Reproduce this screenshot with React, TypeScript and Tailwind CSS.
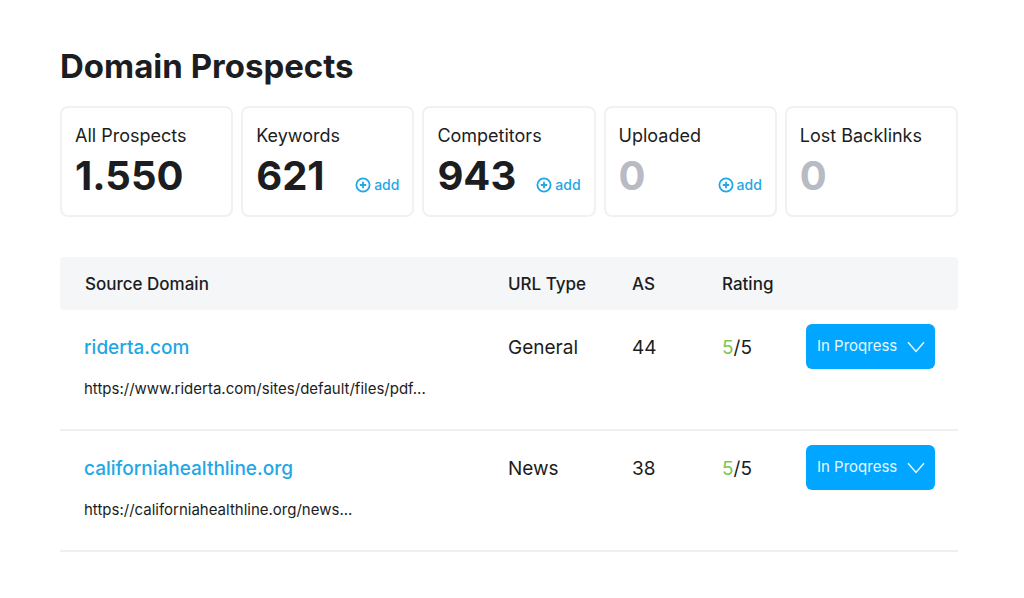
type Stat = { label: string; value: string; addable: boolean; empty: boolean };
type Prospect = { domain: string; href: string; url: string; type: string; score: number };

const stats: Stat[] = [
  { label: "All Prospects", value: "1.550", addable: false, empty: false },
  { label: "Keywords", value: "621", addable: true, empty: false },
  { label: "Competitors", value: "943", addable: true, empty: false },
  { label: "Uploaded", value: "0", addable: true, empty: true },
  { label: "Lost Backlinks", value: "0", addable: false, empty: true },
];

const prospects: Prospect[] = [
  {
    domain: "riderta.com",
    href: "https://www.riderta.com",
    url: "https://www.riderta.com/sites/default/files/pdf...",
    type: "General",
    score: 44,
  },
  {
    domain: "californiahealthline.org",
    href: "https://californiahealthline.org",
    url: "https://californiahealthline.org/news...",
    type: "News",
    score: 38,
  },
];

function PlusCircle() {
  return (
    <svg viewBox="0 0 16 16" className="size-4" fill="none" stroke="currentColor" strokeWidth="1.8" aria-hidden="true">
      <circle cx="8" cy="8" r="6.6" />
      <path d="M8 4.8v6.4M4.8 8h6.4" />
    </svg>
  );
}

function StatCard({ stat }: { stat: Stat }) {
  return (
    <div className="rounded-lg border-2 border-[#f0f1f2] px-[13px] pt-4 pb-[15px]">
      <p className="text-lg leading-6 whitespace-nowrap">{stat.label}</p>
      <div className="mt-1 flex items-center justify-between">
        <span className={stat.empty ? "text-[40px] leading-12 font-bold text-[#b8bac4]" : "text-[40px] leading-12 font-bold"}>
          {stat.value}
        </span>
        {stat.addable && (
          <button
            type="button"
            aria-label={`add ${stat.label}`}
            className="mt-[18px] flex items-center gap-[3px] text-sm leading-5 font-medium text-[#1fa7e6]"
          >
            <PlusCircle />
            add
          </button>
        )}
      </div>
    </div>
  );
}

function StatusSelect({ domain }: { domain: string }) {
  return (
    <div className="relative w-[129px]">
      <select
        aria-label={`Status of ${domain}`}
        className="h-[45px] w-full appearance-none rounded-md bg-[#00a6ff] pr-8 pb-0.5 pl-[11px] text-[15px] text-[#e6f7ff]"
      >
        <option>In Proqress</option>
      </select>
      <svg
        viewBox="0 0 18 12"
        className="pointer-events-none absolute top-[17px] right-2.5 h-3 w-[18px] text-[#e6f7ff]"
        fill="none"
        stroke="currentColor"
        strokeWidth="1.5"
        aria-hidden="true"
      >
        <path d="M1 1.2 9 10.4 17 1.2" />
      </svg>
    </div>
  );
}

export default function App() {
  return (
    <main className="min-h-screen bg-white pt-[46px] pr-[66px] pb-11 pl-[60px] font-['Inter',sans-serif] text-[#1b1d21]">
      <h1 className="text-[33px] leading-10 font-bold">Domain Prospects</h1>

      <section aria-label="Summary" className="mt-5 grid grid-cols-5 gap-2">
        {stats.map((stat) => (
          <StatCard key={stat.label} stat={stat} />
        ))}
      </section>

      <table className="mt-10 w-full table-fixed border-separate border-spacing-0 text-left">
        <thead className="text-[17px] leading-6">
          <tr className="h-[53px] bg-[#f5f6f8]">
            <th className="rounded-l-sm pl-[25px] font-medium">Source Domain</th>
            <th className="w-[124px] font-medium">URL Type</th>
            <th className="w-[90px] font-medium">AS</th>
            <th className="w-[84px] font-medium">Rating</th>
            <th className="w-[152px] rounded-r-sm" aria-label="Status" />
          </tr>
        </thead>
        <tbody className="text-[19px] leading-6">
          {prospects.map((p) => (
            <tr key={p.domain} className="align-top *:border-b-2 *:border-[#eeeff0]">
              <td className="pt-[26px] pb-7 pl-6">
                <a href={p.href} className="font-medium text-[#1fa7e6]">
                  {p.domain}
                </a>
                <p className="mt-[17px] text-[15px]">{p.url}</p>
              </td>
              <td className="pt-[26px]">{p.type}</td>
              <td className="pt-[26px]">{p.score}</td>
              <td className="pt-[26px]">
                <span className="text-[#7cc653]">5</span>/5
              </td>
              <td className="pt-3.5">
                <StatusSelect domain={p.domain} />
              </td>
            </tr>
          ))}
        </tbody>
      </table>
    </main>
  );
}
